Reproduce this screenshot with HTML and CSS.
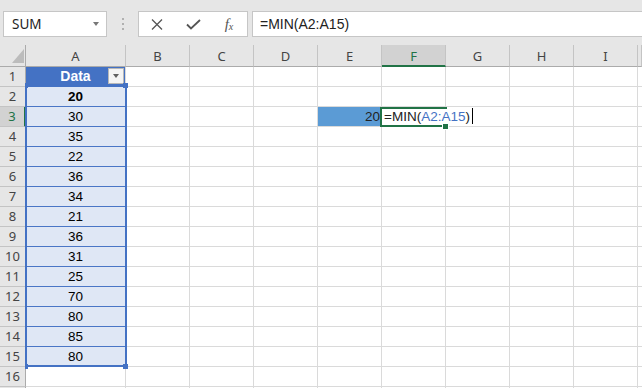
FILE: index.html
```html
<!DOCTYPE html>
<html lang="en">
<head>
    <meta charset="UTF-8">
    <meta name="viewport" content="width=device-width, initial-scale=1.0">
    <title>MIN formula</title>
    <link rel="stylesheet" href="styles.css">
</head>
<body>
    <div class="formula-bar">
        <div class="name-box">SUM<span class="caret"></span></div>
        <div class="grip"><i></i><i></i><i></i></div>
        <div class="fx-buttons">
            <span class="fx-slot">
                <svg width="12" height="11" viewBox="0 0 12 11"><path d="M1 0.5L11 10.5M11 0.5L1 10.5" stroke="#555" stroke-width="1.3" fill="none"/></svg>
            </span>
            <span class="fx-slot">
                <svg width="15" height="11" viewBox="0 0 15 11"><path d="M1 5.5L5 9.5L14 1" stroke="#555" stroke-width="1.8" fill="none"/></svg>
            </span>
            <span class="fx-slot"><span class="fx">f<sub>x</sub></span></span>
        </div>
        <div class="formula-input">=MIN(A2:A15)</div>
    </div>

    <div class="sheet" id="sheet">
        <div class="range-ref">
            <span class="handle tl"></span>
            <span class="handle tr"></span>
            <span class="handle bl"></span>
            <span class="handle br"></span>
        </div>
        <div class="active-cell"><span class="fill-handle"></span></div>
    </div>

    <script>
        const cols = ['A', 'B', 'C', 'D', 'E', 'F', 'G', 'H', 'I', ''];
        const data = [20, 30, 35, 22, 36, 34, 21, 36, 31, 25, 70, 80, 85, 80];
        const sheet = document.getElementById('sheet');

        function addCell(cls, html) {
            const div = document.createElement('div');
            div.className = cls;
            if (html !== undefined) div.innerHTML = html;
            sheet.appendChild(div);
        }

        // header row
        addCell('corner');
        cols.forEach(c => addCell('col-head' + (c === 'F' ? ' selected' : ''), c));

        // row 17 only peeks in by a pixel, so it gets no label
        for (let r = 1; r <= 17; r++) {
            addCell('row-head' + (r === 3 ? ' selected' : ''), r < 17 ? r : '');
            cols.forEach(c => {
                if (c === 'A' && r === 1) {
                    addCell('cell table-head', 'Data<span class="filter"></span>');
                } else if (c === 'A' && r <= 15) {
                    addCell('cell table-row' + (r === 2 ? ' bold' : ''), data[r - 2]);
                } else if (c === 'E' && r === 3) {
                    addCell('cell min-result', '20');
                } else if (c === 'F' && r === 3) {
                    addCell('cell editing', '<span class="edit-text">=MIN(<span class="ref">A2:A15</span>)<span class="cursor"></span></span>');
                } else {
                    addCell('cell');
                }
            });
        }
    </script>
</body>
</html>
```

FILE: styles.css
```css
* {
    box-sizing: border-box;
}
body {
    margin: 0;
    width: 642px;
    height: 388px;
    overflow: hidden;
    background: #fff;
    font-family: "Liberation Sans", Arial, sans-serif;
}

/* formula bar */
.formula-bar {
    display: flex;
    align-items: flex-start;
    height: 45px;
    padding: 11px 0 0 3px;
    background: #e6e6e6;
}
.name-box, .fx-buttons, .formula-input {
    height: 26px;
    background: #fff;
    border: 1px solid #c6c6c6;
}
.name-box {
    display: flex;
    align-items: center;
    width: 104px;
    padding: 0 7px 0 8px;
    font-family: "Noto Sans", sans-serif;
    font-size: 13.5px;
    color: #222;
}
.caret {
    margin-left: auto;
    border-left: 3.5px solid transparent;
    border-right: 3.5px solid transparent;
    border-top: 4px solid #777;
}
.grip {
    display: flex;
    flex-direction: column;
    align-items: center;
    gap: 3px;
    width: 31px;
    padding-top: 7px;
}
.grip i {
    width: 2px;
    height: 2px;
    background: #b0b0b0;
}
.fx-buttons {
    display: flex;
    width: 110px;
}
.fx-slot {
    display: flex;
    align-items: center;
    justify-content: center;
    width: 36px;
}
.fx {
    font-family: "Liberation Serif", serif;
    font-style: italic;
    font-size: 15px;
    color: #555;
}
.fx sub {
    font-size: 10px;
    vertical-align: -1px;
}
.formula-input {
    flex: 1;
    margin-left: 4px;
    border-right: none;
    padding-left: 7px;
    font-size: 14px;
    line-height: 24px;
    color: #222;
}

/* grid */
.sheet {
    position: relative;
    display: grid;
    grid-template-columns: 26px 100px repeat(8, 64px) 4px;
    grid-template-rows: 22px repeat(17, 20px);
    height: 343px;
    overflow: hidden;
}
.corner, .col-head, .row-head {
    background: #e6e6e6;
    border-right: 1px solid #c4c4c4;
    border-bottom: 1px solid #c4c4c4;
    font-family: "Noto Sans", sans-serif;
    font-size: 13px;
    color: #444;
    text-align: center;
}
.corner {
    position: relative;
    border-right-color: #ababab;
    border-bottom-color: #ababab;
}
.corner::after {
    content: "";
    position: absolute;
    left: 12px;
    top: 4px;
    width: 12px;
    height: 14px;
    background: #bcbcbc;
    clip-path: polygon(100% 0, 100% 100%, 0 100%);
}
.col-head {
    border-bottom-color: #ababab;
    line-height: 22px;
}
.row-head {
    border-right-color: #ababab;
    line-height: 19px;
}
.col-head.selected {
    background: #d2d2d2;
    color: #217346;
    border-bottom: 2px solid #217346;
}
.row-head.selected {
    background: #d2d2d2;
    color: #217346;
    border-right: 2px solid #217346;
}
.cell {
    border-right: 1px solid #dadada;
    border-bottom: 1px solid #dadada;
    padding: 0 2px;
    font-size: 13.5px;
    line-height: 19px;
    color: #000;
    white-space: nowrap;
}
.table-head {
    position: relative;
    background: #4472c4;
    color: #fff;
    font-size: 14px;
    font-weight: bold;
    text-align: center;
}
.filter {
    position: absolute;
    right: 1px;
    top: 1px;
    width: 16px;
    height: 16px;
    background: #f4f4f4;
    border: 1px solid #b8b8b8;
}
.filter::after {
    content: "";
    position: absolute;
    left: 4px;
    top: 5px;
    border-left: 3.5px solid transparent;
    border-right: 3.5px solid transparent;
    border-top: 4px solid #606060;
}
.table-row {
    background: #dfe7f5;
    border-bottom-color: #4a76c6;
    text-align: center;
}
.bold {
    font-weight: bold;
}
.min-result {
    background: #5b9bd5;
    text-align: right;
    padding-right: 1px;
    color: #222;
}
.editing {
    position: relative;
}
.edit-text {
    position: absolute;
    left: 0;
    top: 0;
    z-index: 2;
    height: 19px;
    padding: 0 2px;
    background: #fff;
    color: #222;
}
.ref {
    color: #4472c4;
}
.cursor {
    display: inline-block;
    width: 1px;
    height: 16px;
    margin-left: 2px;
    vertical-align: -3px;
    background: #000;
}

/* overlays */
.range-ref {
    position: absolute;
    left: 25px;
    top: 40px;
    width: 102px;
    height: 282px;
    border: 2px solid #4472c4;
    z-index: 3;
}
.handle {
    position: absolute;
    width: 5px;
    height: 5px;
    background: #4472c4;
}
.handle.tl { left: -2px; top: -4px; width: 3px; }
.handle.bl { left: -2px; top: 277px; width: 3px; }
.handle.tr { left: 96px; top: -4px; }
.handle.br { left: 96px; top: 277px; }
.active-cell {
    position: absolute;
    left: 380px;
    top: 62px;
    width: 67px;
    height: 20px;
    border: 2px solid #217346;
    border-right: none;
    z-index: 3;
}
.fill-handle {
    position: absolute;
    left: 60px;
    top: 14px;
    width: 7px;
    height: 7px;
    background: #217346;
    border: 1px solid #fff;
}
```
